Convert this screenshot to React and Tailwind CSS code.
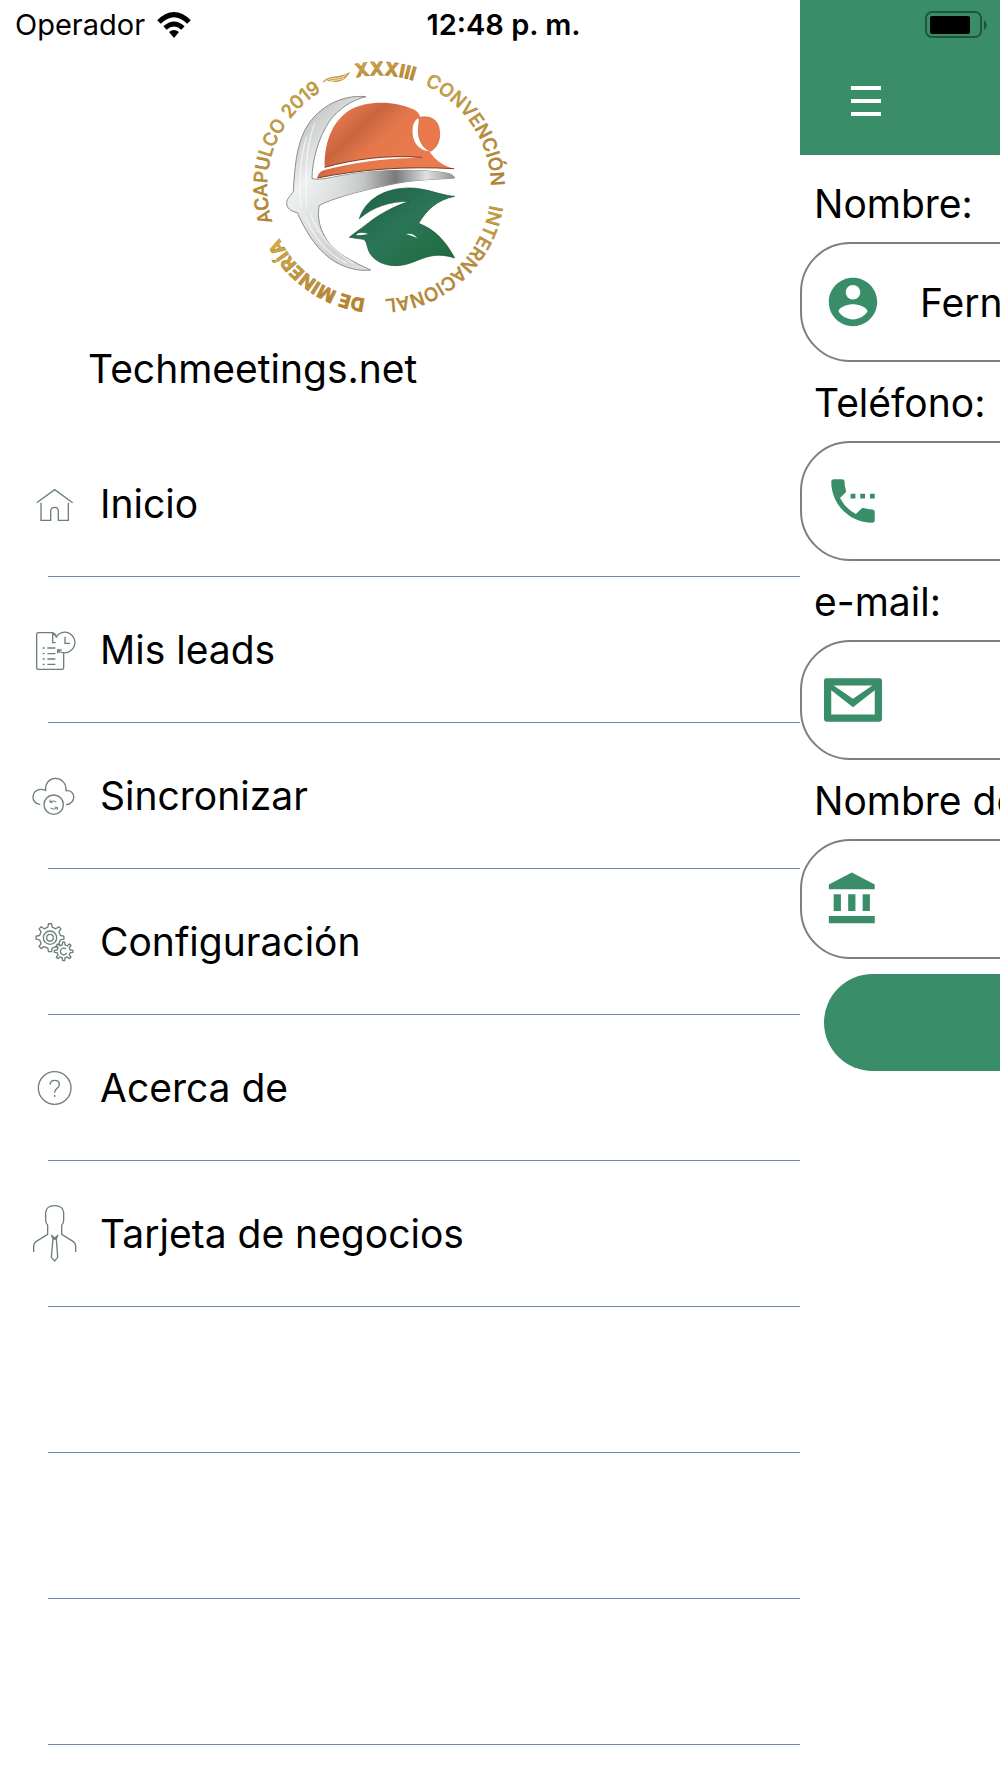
import React, { useState } from 'react';
import { MdSettingsPhone } from 'react-icons/md';

const RING_RADIUS = 336;
const degToOffset = (deg) => (deg * Math.PI * RING_RADIUS) / 180;

// degrees run clockwise from the bottom of the ring
const ringWords = [
  { text: 'DE MINERÍA', deg: 7, weight: 800 },
  { text: 'ACAPULCO 2019', deg: 72, weight: 500 },
  { text: 'XXXIII', deg: 168, weight: 800 },
  { text: 'CONVENCIÓN', deg: 204, weight: 500 },
  { text: 'INTERNACIONAL', deg: 279, weight: 500 },
];

const gearPath = (cx, cy, outer, inner, teeth) => {
  const step = (Math.PI * 2) / teeth;
  const point = (r, a) => `${(cx + r * Math.sin(a)).toFixed(1)} ${(cy - r * Math.cos(a)).toFixed(1)}`;
  const parts = [];
  for (let i = 0; i < teeth; i++) {
    const a = i * step;
    parts.push(point(inner, a - step * 0.26), point(outer, a - step * 0.14), point(outer, a + step * 0.14), point(inner, a + step * 0.26));
  }
  return `M${parts.join('L')}Z`;
};

const Logo = () => (
  <svg viewBox="0 0 840 810" className="w-[280px] h-[270px]" role="img" aria-label="XXXIII Convención Internacional de Minería Acapulco 2019">
    <defs>
      <path id="ring" d="M417 748A336 336 0 1 1 417.1 748" />
      <linearGradient id="gold" x1="0" y1="0" x2="0.3" y2="1">
        <stop offset="0" stopColor="#d9b23c" />
        <stop offset="0.5" stopColor="#c6983a" />
        <stop offset="1" stopColor="#b98426" />
      </linearGradient>
      <linearGradient id="silver" x1="0" y1="0" x2="1" y2="1">
        <stop offset="0" stopColor="#a9abab" />
        <stop offset="0.3" stopColor="#eeefef" />
        <stop offset="0.6" stopColor="#cfd1d1" />
        <stop offset="0.8" stopColor="#e6e7e7" />
        <stop offset="1" stopColor="#707373" />
      </linearGradient>
      <linearGradient id="handle" x1="0" y1="0" x2="1" y2="0">
        <stop offset="0" stopColor="#e4e6e6" stopOpacity="0" />
        <stop offset="0.35" stopColor="#c4c6c6" />
        <stop offset="0.58" stopColor="#77797a" />
        <stop offset="0.8" stopColor="#e0e2e2" />
        <stop offset="1" stopColor="#8f9292" />
      </linearGradient>
      <linearGradient id="helmet" x1="0" y1="0" x2="1" y2="0.6">
        <stop offset="0" stopColor="#e0703f" />
        <stop offset="0.2" stopColor="#e5764a" />
        <stop offset="0.38" stopColor="#c96540" />
        <stop offset="0.55" stopColor="#e5774b" />
        <stop offset="1" stopColor="#ea7c50" />
      </linearGradient>
      <linearGradient id="leaf" x1="0" y1="0" x2="1" y2="1">
        <stop offset="0" stopColor="#1d6044" />
        <stop offset="0.5" stopColor="#2b7558" />
        <stop offset="1" stopColor="#1f6a3a" />
      </linearGradient>
    </defs>

    {ringWords.map((word) => (
      <text key={word.text} fontSize="56" fontWeight={word.weight} fill="url(#gold)" stroke="#8a6a2a" strokeWidth="1" className="font-['Inter',sans-serif]">
        <textPath href="#ring" startOffset={degToOffset(word.deg)}>{word.text}</textPath>
      </text>
    ))}

    <path d="M246 98C268 72 288 88 330 66C316 92 296 100 272 94C262 92 254 94 246 98Z" fill="#c29745" />
    <path d="M256 93C280 80 298 90 320 74M264 95C284 88 300 92 312 84" fill="none" stroke="#f7e7bd" strokeWidth="3" />

    {/* pickaxe */}
    <path
      d="M378 140C300 132 222 178 190 250C170 296 164 350 160 424C154 436 140 444 140 460C140 474 152 484 172 488C200 552 236 606 286 636C322 656 358 664 392 660C340 636 290 612 262 572C240 540 230 502 238 466C290 440 380 418 470 400C530 388 596 388 644 384C640 372 620 368 596 366C500 356 400 362 320 374C280 380 244 392 216 386C216 330 236 262 268 214C296 176 336 150 378 140Z"
      fill="url(#silver)"
      stroke="#8b8e8e"
      strokeWidth="3"
    />
    <path d="M238 464C300 436 390 416 470 400C530 388 596 388 644 384C640 372 620 368 596 366C500 356 400 362 320 374C280 380 244 392 222 388Z" fill="url(#handle)" />
    <path d="M200 260C180 320 178 380 182 470M224 220C196 290 196 380 200 470M196 500C220 560 260 610 320 640M210 490C236 560 280 600 340 640" fill="none" stroke="#fff" strokeWidth="4" opacity="0.6" />

    {/* helmet */}
    <path d="M254 352C252 290 270 220 326 182C384 148 468 154 520 178C532 184 540 192 540 202C520 210 516 232 518 252C520 280 540 302 568 304C584 330 610 348 642 356C500 348 360 358 232 384C234 372 240 364 254 360C340 338 440 322 546 324C440 312 340 328 254 352Z" fill="url(#helmet)" />
    <path d="M254 352C340 328 440 314 546 322M232 384C360 358 500 348 642 356" fill="none" stroke="#7d3b22" strokeWidth="3" />
    <path d="M536 203C560 196 590 204 596 230C604 262 596 290 572 304C548 296 536 270 535 246C534 230 540 216 536 203Z" fill="#e9794b" stroke="#c7603a" strokeWidth="2" />

    {/* leaf bird */}
    <path d="M358 506C376 450 430 414 510 414C560 414 600 436 644 439C590 450 560 480 536 520C590 540 620 580 644 624C590 606 560 620 520 636C470 656 420 648 394 616C378 596 384 574 370 568L328 562C350 544 366 534 386 518C420 492 460 470 508 454C450 454 400 470 358 506Z" fill="url(#leaf)" stroke="#184f37" strokeWidth="2" />
    <path d="M350 552Q366 544 384 552Q366 556 350 556ZM498 552Q518 548 532 564Q514 556 498 552Z" fill="#fff" />
  </svg>
);

const iconClass = 'w-[60px] h-[60px] shrink-0 fill-none stroke-[#6d7f7b] stroke-[4]';

const HomeIcon = () => (
  <svg viewBox="12 12 180 180" className={iconClass} aria-hidden="true">
    <path d="M50 98L104 59L158 98M63 98V151H92V124Q92 112 104 112Q115 112 115 124V151H145V98" />
  </svg>
);

const LeadsIcon = () => (
  <svg viewBox="12 450 180 180" className={iconClass} aria-hidden="true">
    <path d="M107 494L98 488H55Q50 488 50 493V593Q50 598 55 598H126Q131 598 131 593V550M98 488V518H107" />
    <path d="M98 490L112 502" />
    <path d="M107 502A31 31 0 1 1 122 546" />
    <path d="M135 500V520H150M125 540H113V550M113 540L121 548" />
    <path d="M68 534H74M82 534H106M68 551H74M82 551H106M68 567H74M82 567H106M68 583H74M82 583H106" />
  </svg>
);

const SyncIcon = () => (
  <svg viewBox="12 18 180 180" className={iconClass} aria-hidden="true">
    <path d="M61 134C30 130 32 88 64 88Q71 88 77 91C72 44 140 42 138 92C168 88 170 132 138 134" />
    <circle cx="101" cy="134" r="29" />
    <path d="M90 119V127H98M90 126Q98 119 109 126M112 150V142H104M112 143Q104 152 91 144" strokeWidth="3" />
  </svg>
);

const GearsIcon = () => (
  <svg viewBox="12 456 180 180" className={iconClass} strokeLinejoin="round" aria-hidden="true">
    <path d={gearPath(90, 533, 42, 32, 8)} />
    <circle cx="90" cy="533" r="20" />
    <circle cx="90" cy="533" r="10" />
    <path d={gearPath(131, 574, 28, 20, 8)} className="fill-white" />
    <path d="M138 567A10 10 0 1 0 140 579" />
  </svg>
);

const HelpIcon = () => (
  <svg viewBox="12 -6 180 180" className={iconClass} aria-hidden="true">
    <circle cx="104" cy="84" r="49" />
    <path d="M90 74Q91 61 104 61Q118 61 118 74Q118 81 110 86Q104 90 104 98M104 105V111" />
  </svg>
);

const CardIcon = () => (
  <svg viewBox="12 432 180 180" className={iconClass} aria-hidden="true">
    <path d="M41 576V558Q41 549 49 544L83 523V496Q77 490 77 480V458Q79 437 104 437Q129 437 131 458V480Q131 490 125 496V523L159 544Q167 549 167 558V576" />
    <path d="M94 524L99 536L94 592L104 603L113 592L109 536L114 524M94 526L104 535L114 526M99 537H109" />
  </svg>
);

const menuItems = [
  { label: 'Inicio', Icon: HomeIcon },
  { label: 'Mis leads', Icon: LeadsIcon },
  { label: 'Sincronizar', Icon: SyncIcon },
  { label: 'Configuración', Icon: GearsIcon },
  { label: 'Acerca de', Icon: HelpIcon },
  { label: 'Tarjeta de negocios', Icon: CardIcon },
];

const fieldIconClass = 'w-[58px] h-[58px] shrink-0 fill-[#398e69]';

const PersonIcon = () => (
  <svg viewBox="0 0 24 24" className={fieldIconClass} aria-hidden="true">
    <path d="M12 2C6.48 2 2 6.48 2 12s4.48 10 10 10 10-4.48 10-10S17.52 2 12 2zm0 3c1.66 0 3 1.34 3 3s-1.34 3-3 3-3-1.34-3-3 1.34-3 3-3zm0 14.2c-2.5 0-4.71-1.28-6-3.22.03-1.99 4-3.08 6-3.08 1.99 0 5.97 1.09 6 3.08-1.29 1.94-3.5 3.22-6 3.22z" />
  </svg>
);

const PhoneIcon = () => <MdSettingsPhone className={fieldIconClass} aria-hidden="true" />;

const MailIcon = () => (
  <svg viewBox="0 0 24 24" className={fieldIconClass} aria-hidden="true">
    <path fillRule="evenodd" d="M1 3H23Q24 3 24 4V20Q24 21 23 21H1Q0 21 0 20V4Q0 3 1 3ZM3 8V18H21V8L12 15ZM4 6L12 11.500L20 6Z" />
  </svg>
);

const BankIcon = () => (
  <svg viewBox="0 0 24 24" className={fieldIconClass} aria-hidden="true">
    <path d="M4 10v7h3v-7H4zm6 0v7h3v-7h-3zM2 22h19v-3H2v3zm14-12v7h3v-7h-3zm-4.500-9L2 6v2h19V6l-9.500-5z" />
  </svg>
);

const fields = [
  { id: 'nombre', label: 'Nombre:', type: 'text', Icon: PersonIcon },
  { id: 'telefono', label: 'Teléfono:', type: 'tel', Icon: PhoneIcon },
  { id: 'email', label: 'e-mail:', type: 'email', Icon: MailIcon },
  { id: 'empresa', label: 'Nombre de', type: 'text', Icon: BankIcon },
];

const StatusBar = () => (
  <div className="absolute inset-x-0 top-0 z-10 grid grid-cols-3 items-center h-[50px] pl-[15px] pr-3 text-[29px]">
    <div className="flex items-center gap-3">
      <span>Operador</span>
      <svg viewBox="0 0 34 26" className="w-[34px] h-[26px]" aria-hidden="true">
        <path d="M2 10Q17 -5 32 10M8 16Q17 8 26 16" fill="none" stroke="#000" strokeWidth="5" />
        <path d="M12 20Q17 16 22 20L17 26Z" />
      </svg>
    </div>
    <span className="pl-1 text-center font-semibold whitespace-nowrap">12:48 p. m.</span>
    <svg viewBox="0 0 64 28" className="w-[64px] h-[28px] justify-self-end" aria-hidden="true">
      <rect x="2" y="1" width="55" height="25" rx="6" fill="none" stroke="#22553f" strokeWidth="2" />
      <rect x="6" y="5" width="40" height="18" rx="2" />
      <path d="M60 9Q63 11 63 14Q63 17 60 19Z" fill="#22553f" />
    </svg>
  </div>
);

export default function App() {
  const [values, setValues] = useState({ nombre: 'Fern', telefono: '', email: '', empresa: '' });

  const handleChange = (e) => setValues({ ...values, [e.target.id]: e.target.value });

  return (
    <div className="relative flex min-h-screen overflow-hidden bg-white text-black font-['Inter',sans-serif]">
      <StatusBar />

      <aside className="w-4/5 shrink-0 pt-[50px]">
        <div className="flex justify-center pr-[40px]">
          <Logo />
        </div>
        <h1 className="h-[111px] pt-6 pl-[88px] text-[39px] leading-[50px]">Techmeetings.net</h1>
        <nav>
          <ul>
            {menuItems.map(({ label, Icon }) => (
              <li key={label}>
                <a href="#" className="flex items-center gap-4 h-[146px] pl-6 text-[39px]">
                  <Icon />
                  {label}
                </a>
                <div className="-mt-px ml-12 h-px bg-[#6f86b3]" />
              </li>
            ))}
            {[1, 2, 3].map(i => (
              <li key={i} className="flex flex-col justify-end h-[146px]">
                <div className="ml-12 h-px bg-[#6f86b3]" />
              </li>
            ))}
          </ul>
        </nav>
      </aside>

      <main className="w-full shrink-0">
        <header className="h-[155px] pt-[71px] pl-9 bg-[#398e69]">
          <button type="button" aria-label="Menú" className="flex items-center justify-center w-[60px] h-[60px]">
            <svg viewBox="0 0 30 30" className="w-[30px] h-[30px] fill-white" aria-hidden="true">
              <path d="M0 0H30V4H0ZM0 13H30V17H0ZM0 26H30V30H0Z" />
            </svg>
          </button>
        </header>
        <form className="pt-2">
          {fields.map(({ id, label, type, Icon }) => (
            <div key={id}>
              <label htmlFor={id} className="flex items-center h-[79px] pt-1 pl-[14px] whitespace-nowrap text-[39px]">{label}</label>
              <div className="flex items-center gap-[38px] h-[120px] px-[22px] border-2 border-[#7f7f7f] rounded-[50px]">
                <Icon />
                <input id={id} type={type} value={values[id]} onChange={handleChange} className="flex-1 min-w-0 h-[80px] text-[39px] outline-none" />
              </div>
            </div>
          ))}
          <button type="button" aria-label="Guardar" className="block w-11/12 h-[97px] mt-[15px] ml-6 rounded-full bg-[#398e69]" />
        </form>
      </main>
    </div>
  );
}
